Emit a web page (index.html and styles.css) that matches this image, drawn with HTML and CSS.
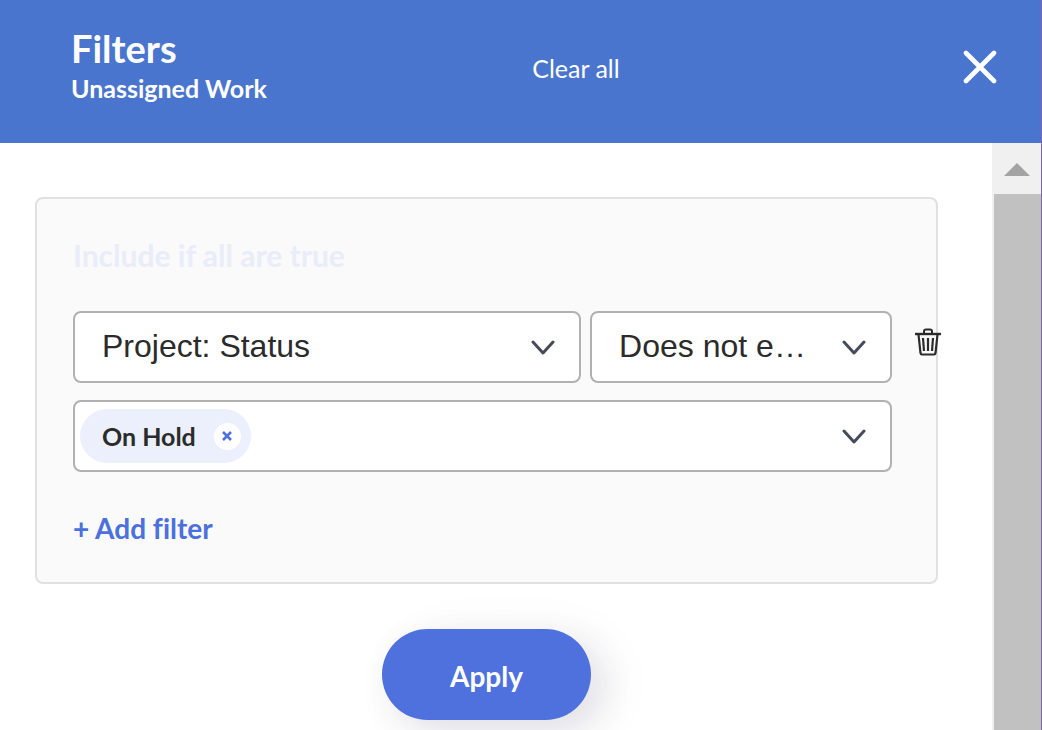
FILE: index.html
```html
<!DOCTYPE html>
<html lang="en">
<head>
<meta charset="utf-8">
<meta name="viewport" content="width=device-width, initial-scale=1">
<title>Filters</title>
<link rel="stylesheet" href="styles.css">
</head>
<body>
<div class="panel">
  <header class="header">
    <div class="titles">
      <h1 class="title">Filters</h1>
      <p class="subtitle">Unassigned Work</p>
    </div>
    <button class="clear" type="button">Clear all</button>
    <button class="close" type="button" aria-label="Close">
      <svg width="34" height="34" viewBox="0 0 34 34"><path d="M3 3 31 31M31 3 3 31" fill="none" stroke="#fff" stroke-width="4.600" stroke-linecap="round"/></svg>
    </button>
  </header>
  <div class="body">
    <main class="content">
      <section class="card">
        <h2 class="card-title">Include if all are true</h2>
        <div class="row">
          <div class="field field-name">
            <select class="select" aria-label="Field"><option>Project: Status</option></select>
            <svg class="chevron" width="24" height="16" viewBox="0 0 24 16"><path d="M2 2 12 13 22 2" /></svg>
          </div>
          <div class="field field-operator">
            <select class="select" aria-label="Operator"><option>Does not e…</option></select>
            <svg class="chevron" width="24" height="16" viewBox="0 0 24 16"><path d="M2 2 12 13 22 2" /></svg>
          </div>
          <button class="trash" type="button" aria-label="Delete filter">
            <svg width="28" height="28" viewBox="0 0 28 28" fill="none" stroke="#2b2b2b"><path d="M1 6H27" stroke-width="2.400"/><path d="M10 5.500V3.500Q10 1.500 12 1.500H16Q18 1.500 18 3.500V5.500" stroke-width="2"/><path d="M4.500 6.500 6.500 25Q6.700 26.500 8 26.500H20Q21.300 26.500 21.500 25L23.500 6.500" stroke-width="2.200"/><path d="M9 10 10 23M14 10V23M19 10 18 23" stroke-width="2.200"/></svg>
          </button>
        </div>
        <div class="field values">
          <span class="chip">On Hold
            <button class="chip-remove" type="button" aria-label="Remove On Hold"><svg width="10" height="10" viewBox="0 0 10 10"><path d="M1 1 9 9M9 1 1 9" fill="none" stroke="#4c70dc" stroke-width="2.600"/></svg></button>
          </span>
          <svg class="chevron" width="24" height="16" viewBox="0 0 24 16"><path d="M2 2 12 13 22 2" /></svg>
        </div>
        <button class="add" type="button">+ Add filter</button>
      </section>
      <button class="apply" type="button">Apply</button>
    </main>
    <div class="scrollbar">
      <svg class="arrow" width="26" height="13" viewBox="0 0 26 13"><path d="M0 13 13 0 26 13Z" fill="#a3a3a3"/></svg>
      <div class="thumb"></div>
    </div>
  </div>
</div>
</body>
</html>
```
FILE: styles.css
```css
* { box-sizing: border-box; }
body {
  margin: 0;
  background: #fff;
  color: #2b2b2b;
  font-family: Lato, "Noto Sans", sans-serif;
  font-variant-ligatures: none;
}
button {
  margin: 0;
  padding: 0;
  border: 0;
  background: none;
  color: inherit;
  font: inherit;
  font-variant-ligatures: none;
  cursor: pointer;
}
svg { display: block; }
.panel {
  display: flex;
  flex-direction: column;
  height: 100vh;
  overflow: hidden;
  border-right: 1px solid #8064ac;
}
.header {
  display: grid;
  grid-template-columns: 11fr auto 9fr;
  flex: none;
  padding: 24px 44px 39px 71px;
  background: #4a75cf;
  color: #fff;
}
.title {
  margin: 0;
  font-size: 38px;
  line-height: 48px;
  font-weight: 700;
}
.subtitle {
  margin: 0;
  font-size: 25px;
  line-height: 32px;
  font-weight: 700;
}
.clear {
  align-self: start;
  margin-top: 28px;
  font-size: 25px;
  line-height: 32px;
}
.close {
  justify-self: end;
  align-self: start;
  margin-top: 26px;
}
.body {
  display: flex;
  flex: 1;
  min-height: 0;
}
.content {
  display: flex;
  flex-direction: column;
  flex: 1;
  min-width: 0;
  padding: 54px 54px 0 35px;
  overflow: hidden;
}
.card {
  flex: none;
  padding: 34px 44px 35px 36px;
  border: 2px solid #e1e1e1;
  border-radius: 8px;
  background: #fafafa;
}
.card-title {
  margin: 0 0 34px;
  color: #e9edf9;
  font-size: 30px;
  line-height: 44px;
  font-weight: 700;
}
.row {
  position: relative;
  display: flex;
  gap: 9px;
  margin-bottom: 17px;
}
.field {
  position: relative;
  height: 72px;
  border: 2px solid #b1b1b1;
  border-radius: 8px;
  background: #fff;
}
.field-name { flex: 22; min-width: 0; }
.field-operator { flex: 13; min-width: 0; }
.select {
  appearance: none;
  width: 100%;
  height: 100%;
  padding: 0 70px 2px 27px;
  border: 0;
  border-radius: 6px;
  background: transparent;
  color: #2b2b2b;
  font-family: "Liberation Sans", Arial, sans-serif;
  font-size: 32px;
}
.chevron {
  position: absolute;
  top: 27px;
  right: 24px;
  fill: none;
  stroke: #464b5a;
  stroke-width: 3;
  stroke-linecap: round;
  stroke-linejoin: round;
  pointer-events: none;
}
.trash {
  position: absolute;
  top: 17px;
  right: -50px;
}
.values {
  display: flex;
  align-items: center;
  padding: 0 5px;
}
.chip {
  display: flex;
  align-items: center;
  gap: 18px;
  height: 54px;
  padding: 0 10px 0 22px;
  border-radius: 27px;
  background: #ecf0fc;
  font-size: 25px;
  font-weight: 700;
}
.chip-remove {
  display: grid;
  place-items: center;
  width: 27px;
  height: 27px;
  border-radius: 50%;
  background: #fff;
}
.add {
  display: block;
  margin-top: 38px;
  margin-bottom: 1px;
  color: #4c70dc;
  font-size: 28px;
  line-height: 36px;
  font-weight: 700;
}
.apply {
  flex: none;
  align-self: center;
  margin-top: 45px;
  padding: 29px 68px 26px;
  border-radius: 46px;
  background: #4e71de;
  color: #fff;
  font-size: 28px;
  line-height: 36px;
  font-weight: 700;
  box-shadow: 12px 12px 36px rgba(40, 40, 80, 0.12), 20px 8px 64px rgba(40, 40, 80, 0.04);
}
.scrollbar {
  display: flex;
  flex-direction: column;
  width: 49px;
  padding-left: 2px;
  background: #f0f0f0;
}
.arrow {
  flex: none;
  margin: 20px 10px 18px;
}
.thumb {
  flex: 1;
  background: #c1c1c1;
}
```
